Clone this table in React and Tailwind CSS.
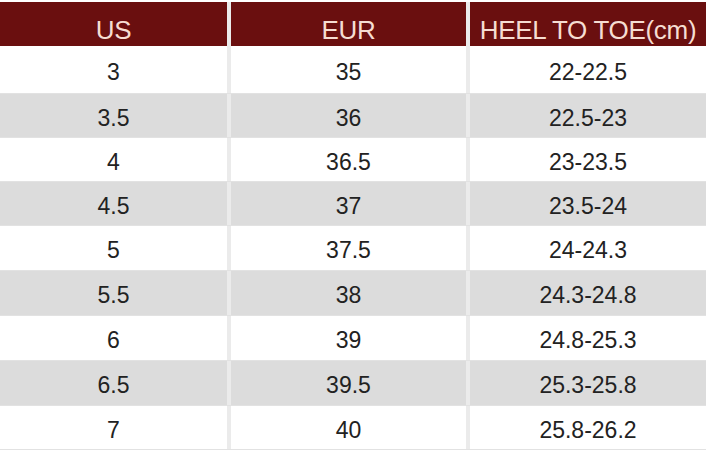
const rows = [
  ['3', '35', '22-22.5'],
  ['3.5', '36', '22.5-23'],
  ['4', '36.5', '23-23.5'],
  ['4.5', '37', '23.5-24'],
  ['5', '37.5', '24-24.3'],
  ['5.5', '38', '24.3-24.8'],
  ['6', '39', '24.8-25.3'],
  ['6.5', '39.5', '25.3-25.8'],
  ['7', '40', '25.8-26.2'],
];

// row heights measured from the picture
const heights = ['h-[48px]', 'h-[44px]', 'h-[44px]', 'h-[44px]', 'h-[45px]', 'h-[45px]', 'h-[45px]', 'h-[45px]', 'h-[44px]'];

export default function App() {
  return (
    <div
      className="w-[706px] h-[453px] bg-white pt-[2px] overflow-hidden"
      style={{ fontFamily: '"Liberation Sans", Arial, sans-serif' }}
    >
      {/* header */}
      <div className="grid grid-cols-[227px_235px_1fr] gap-x-[4px] bg-[#ebebeb] h-[44px]">
        {['US', 'EUR', 'HEEL TO TOE(cm)'].map((h) => (
          <div
            key={h}
            className="bg-[#6a0f0f] text-[#f6ddd2] text-[26px] leading-none flex items-center justify-center pt-[11px] tracking-[-0.3px]"
          >
            {h}
          </div>
        ))}
      </div>

      {/* size rows */}
      {rows.map((r, i) => (
        <div
          key={i}
          className={`grid grid-cols-[227px_235px_1fr] gap-x-[4px] bg-[#ebebeb] ${heights[i]} border-b border-[#e2e2e2]`}
        >
          {r.map((c, j) => (
            <div
              key={j}
              className={`${i % 2 === 1 ? 'bg-[#dcdcdc]' : 'bg-white'} text-[#222] text-[23px] flex items-center justify-center pt-[5px]`}
            >
              {c}
            </div>
          ))}
        </div>
      ))}
    </div>
  );
}
